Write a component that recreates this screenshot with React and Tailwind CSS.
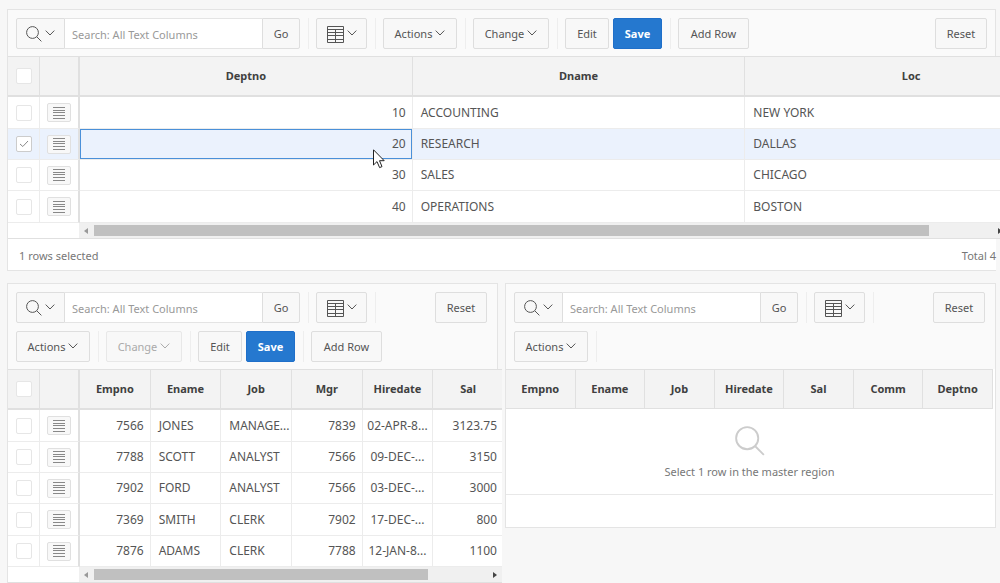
import React, { useState } from "react";

const DEPARTMENTS = [
  { deptno: 10, dname: "ACCOUNTING", loc: "NEW YORK" },
  { deptno: 20, dname: "RESEARCH", loc: "DALLAS" },
  { deptno: 30, dname: "SALES", loc: "CHICAGO" },
  { deptno: 40, dname: "OPERATIONS", loc: "BOSTON" },
];

const EMPLOYEES = [
  { empno: 7566, ename: "JONES", job: "MANAGE...", mgr: 7839, hiredate: "02-APR-8...", sal: "3123.75" },
  { empno: 7788, ename: "SCOTT", job: "ANALYST", mgr: 7566, hiredate: "09-DEC-...", sal: "3150" },
  { empno: 7902, ename: "FORD", job: "ANALYST", mgr: 7566, hiredate: "03-DEC-...", sal: "3000" },
  { empno: 7369, ename: "SMITH", job: "CLERK", mgr: 7902, hiredate: "17-DEC-...", sal: "800" },
  { empno: 7876, ename: "ADAMS", job: "CLERK", mgr: 7788, hiredate: "12-JAN-8...", sal: "1100" },
];

const DEPT_COLUMNS = [
  { key: "deptno", label: "Deptno", align: "right" },
  { key: "dname", label: "Dname", align: "left" },
  { key: "loc", label: "Loc", align: "left" },
];

const EMP_COLUMNS = [
  { key: "empno", label: "Empno", align: "right" },
  { key: "ename", label: "Ename", align: "left" },
  { key: "job", label: "Job", align: "left" },
  { key: "mgr", label: "Mgr", align: "right" },
  { key: "hiredate", label: "Hiredate", align: "center" },
  { key: "sal", label: "Sal", align: "right" },
];

const DETAIL_COLUMNS = ["Empno", "Ename", "Job", "Hiredate", "Sal", "Comm", "Deptno"];

const ALIGN = {
  left: "pl-2 pr-1 text-left",
  right: "pl-1 pr-[6px] text-right",
  center: "px-1 text-center",
};

function SearchIcon({ className }) {
  return (
    <svg viewBox="0 0 16 16" className={className} fill="none" stroke="currentColor">
      <circle cx="6.5" cy="6.5" r="5.9" />
      <path d="M10.8 10.8L15.4 15.4" />
    </svg>
  );
}

function ChevronIcon() {
  return (
    <svg viewBox="0 0 10 6" className="mb-[2px] h-[6px] w-[10px]" fill="none" stroke="currentColor">
      <path d="M0.7 0.6L5 5L9.3 0.6" />
    </svg>
  );
}

function GridIcon() {
  return (
    <svg viewBox="0 0 17 17" className="h-[17px] w-[17px]" fill="none" stroke="currentColor">
      <path d="M0.5 0.5H16.5V16.5H0.5Z" />
      <path d="M0.5 3.5H16.5M0.5 6.5H16.5M0.5 9.5H16.5M0.5 13.5H16.5M8.5 3.5V16.5" />
    </svg>
  );
}

function MenuIcon() {
  return (
    <svg viewBox="0 0 12 12" className="h-3 w-3" fill="none" stroke="currentColor">
      <path d="M0 0.5H12M0 3.5H12M0 5.5H12M0 8.5H12M0 11.5H12" />
    </svg>
  );
}

function Button({ children, className, ...props }) {
  return (
    <button
      type="button"
      className={`flex h-[31px] items-center justify-center gap-[3px] rounded-[2px] border border-[#dedede] bg-[#f8f8f8] pt-px text-[#555] disabled:border-[#e8e8e8] disabled:text-[#aaa] ${className}`}
      {...props}
    >
      {children}
    </button>
  );
}

function Group({ children, last }) {
  return (
    <div className={`flex gap-1 ${last ? "" : "mr-[7px] border-r border-[#eee] pr-2"}`}>
      {children}
    </div>
  );
}

function Toolbar({ editable, changeDisabled, className = "pr-2" }) {
  return (
    <div className={`flex items-start justify-between bg-[#fafafa] pt-2 pb-[7px] pl-2 ${className}`}>
      <div className="flex flex-wrap gap-y-2">
        <Group>
          <div className="flex">
            <Button className="w-[49px] rounded-r-none" aria-label="Search options">
              <SearchIcon className="h-4 w-4" />
              <ChevronIcon />
            </Button>
            <input
              type="text"
              aria-label="Search"
              placeholder="Search: All Text Columns"
              className="h-[31px] w-[197px] border-y border-[#e4e4e4] bg-white px-[7px] pt-px outline-none placeholder:text-[#999]"
            />
            <Button className="w-[38px] rounded-l-none">Go</Button>
          </div>
        </Group>
        <Group>
          <Button className="w-[51px]" aria-label="View">
            <GridIcon />
            <ChevronIcon />
          </Button>
        </Group>
        <Group>
          <Button className="w-[74px]">
            Actions <ChevronIcon />
          </Button>
        </Group>
        {editable && (
          <>
            <Group>
              <Button className="w-[76px]" disabled={changeDisabled}>
                Change <ChevronIcon />
              </Button>
            </Group>
            <Group>
              <Button className="w-[44px]">Edit</Button>
              <button
                type="button"
                className="h-[31px] w-[49px] rounded-[2px] border border-[#1f6fc9] bg-[#2578cf] pt-px font-bold text-white"
              >
                Save
              </button>
            </Group>
            <Group last>
              <Button className="w-[71px]">Add Row</Button>
            </Group>
          </>
        )}
      </div>
      <Button className="w-[52px] shrink-0">Reset</Button>
    </div>
  );
}

function Checkbox({ label, checked, onChange }) {
  return (
    <span className="relative mx-auto flex h-4 w-4">
      <input
        type="checkbox"
        aria-label={label}
        checked={checked}
        onChange={onChange}
        className="h-4 w-4 appearance-none rounded-[2px] border border-[#e6e6e6] bg-white checked:border-[#ccc]"
      />
      {checked && (
        <svg
          viewBox="0 0 16 16"
          className="pointer-events-none absolute inset-0 h-4 w-4 text-[#888]"
          fill="none"
          stroke="currentColor"
        >
          <path d="M4 8L6.8 10.5L12 5" />
        </svg>
      )}
    </span>
  );
}

function Cursor() {
  return (
    <svg viewBox="0 0 12 20" className="pointer-events-none absolute top-5 right-[27px] z-10 h-5 w-3">
      <path d="M0.5 0.8V16L4 12.6L6.6 18.6L9 17.6L6.5 11.7H11.2Z" fill="#fff" stroke="#222" />
    </svg>
  );
}

const HEAD_CELL =
  "h-10 border-r border-b-2 border-[#e0e0e0] bg-[#f3f3f3] p-0 text-center font-bold text-[#404040]";

function DataGrid({ columns, rows, rowKey, selected, onToggle, activeRow, className }) {
  return (
    <table className={`table-fixed border-separate border-spacing-0 bg-white ${className}`}>
      <thead>
        <tr>
          <th className={`w-8 ${HEAD_CELL}`}>
            <Checkbox label="Select all" checked={false} onChange={() => {}} />
          </th>
          <th className={`w-10 border-r-2 ${HEAD_CELL}`}></th>
          {columns.map((col) => (
            <th key={col.key} className={HEAD_CELL}>
              {col.label}
            </th>
          ))}
        </tr>
      </thead>
      <tbody className="text-[12px]">
        {rows.map((row) => {
          const id = row[rowKey];
          const isSelected = selected.includes(id);
          return (
            <tr key={id} className={`h-[31px] nth-[3n+1]:h-8 ${isSelected ? "bg-[#ebf2fd]" : ""}`}>
              <td className="border-r border-b border-[#ececec] p-0">
                <Checkbox label={`Select row ${id}`} checked={isSelected} onChange={() => onToggle(id)} />
              </td>
              <td className="border-r-2 border-b border-[#ececec] border-r-[#e0e0e0] p-0">
                <button
                  type="button"
                  aria-label={`Row actions ${id}`}
                  className="mx-auto flex h-[19px] w-6 items-center justify-center rounded-[2px] border border-[#e0e0e0] bg-[#f8f8f8] text-[#888]"
                >
                  <MenuIcon />
                </button>
              </td>
              {columns.map((col, index) => {
                const active = id === activeRow && index === 0;
                return (
                  <td
                    key={col.key}
                    className={`border-r border-b border-[#ececec] py-0 whitespace-nowrap ${ALIGN[col.align]} ${
                      active ? "relative shadow-[inset_0_0_0_1px_#4a90d9]" : ""
                    }`}
                  >
                    {row[col.key]}
                    {active && <Cursor />}
                  </td>
                );
              })}
            </tr>
          );
        })}
      </tbody>
    </table>
  );
}

function ScrollBar({ thumb }) {
  return (
    <div className="border-b border-[#e0e0e0] bg-white pl-[71px]">
      <div className="flex h-[15px] items-center bg-[#f0f0f0] px-[5px]">
        <svg viewBox="0 0 4 6" className="mr-[6px] h-[6px] w-1 shrink-0 fill-[#999]">
          <path d="M4 0V6L0 3Z" />
        </svg>
        <div className="h-[11px] flex-1">
          <div className="h-[11px] bg-[#c0c0c0]" style={{ width: thumb }}></div>
        </div>
        <svg viewBox="0 0 4 6" className="ml-[6px] h-[6px] w-1 shrink-0 fill-[#444]">
          <path d="M0 0V6L4 3Z" />
        </svg>
      </div>
    </div>
  );
}

function Panel({ children }) {
  return <section className="border border-[#e4e4e4] bg-white">{children}</section>;
}

function MasterRegion() {
  const [selected, setSelected] = useState([20]);

  const toggle = (id) =>
    setSelected((prev) => (prev.includes(id) ? prev.filter((x) => x !== id) : [...prev, id]));

  return (
    <Panel>
      <Toolbar editable />
      <div className="relative -mr-3 border-t border-[#e0e0e0]">
        <div className="overflow-hidden">
          <DataGrid
            columns={DEPT_COLUMNS}
            rows={DEPARTMENTS}
            rowKey="deptno"
            selected={selected}
            onToggle={toggle}
            activeRow={20}
            className="w-[1070px]"
          />
        </div>
        <ScrollBar thumb="93%" />
      </div>
      <footer className="-mr-px flex h-[31px] items-center justify-between bg-white pt-[2px] pl-[11px] text-[#777]">
        <span>{selected.length} rows selected</span>
        <span>Total {DEPARTMENTS.length}</span>
      </footer>
    </Panel>
  );
}

function EmployeeRegion() {
  const [selected, setSelected] = useState([]);

  const toggle = (id) =>
    setSelected((prev) => (prev.includes(id) ? prev.filter((x) => x !== id) : [...prev, id]));

  return (
    <Panel>
      <Toolbar editable changeDisabled className="pr-[10px]" />
      <div className="relative -mr-[5px] border-t border-[#e0e0e0]">
        <div className="overflow-hidden">
          <DataGrid
            columns={EMP_COLUMNS}
            rows={EMPLOYEES}
            rowKey="empno"
            selected={selected}
            onToggle={toggle}
            className="w-[496px]"
          />
        </div>
        <ScrollBar thumb="85%" />
      </div>
    </Panel>
  );
}

function DetailRegion() {
  return (
    <Panel>
      <Toolbar className="pr-[10px]" />
      <div className="mr-[2px] border-t border-[#e0e0e0]">
        <table className="w-full table-fixed border-separate border-spacing-0">
          <thead>
            <tr>
              {DETAIL_COLUMNS.map((label) => (
                <th
                  key={label}
                  className="h-[39px] border-r border-b border-[#e0e0e0] bg-[#f3f3f3] p-0 font-bold text-[#404040]"
                >
                  {label}
                </th>
              ))}
            </tr>
          </thead>
        </table>
        <div className="flex h-[86px] flex-col items-center gap-2 border-b border-[#e8e8e8] pt-[17px] text-[#777]">
          <SearchIcon className="h-[30px] w-[30px] text-[#ccc]" />
          <p>Select 1 row in the master region</p>
        </div>
        <div className="h-8"></div>
      </div>
    </Panel>
  );
}

export default function App() {
  return (
    <main className="flex h-screen flex-col gap-3 overflow-hidden bg-[#f7f7f7] pt-[9px] pr-1 pl-[7px] font-['Noto_Sans',sans-serif] text-[11px] leading-4 text-[#555]">
      <MasterRegion />
      <div className="grid grid-cols-2 items-start gap-[7px]">
        <EmployeeRegion />
        <DetailRegion />
      </div>
    </main>
  );
}
